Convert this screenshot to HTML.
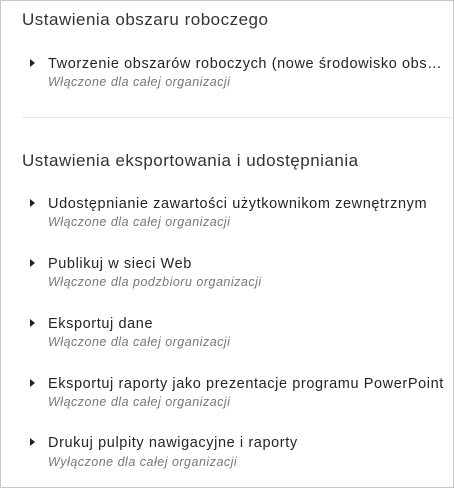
<!DOCTYPE html>
<html><head><meta charset="utf-8"><style>
html,body{margin:0;padding:0}
body{width:454px;height:488px;position:relative;overflow:hidden;background:#fff;font-family:"Liberation Sans",sans-serif;color:#252423}
.frame{position:absolute;left:0;top:0;width:452px;height:486px;border:1px solid #c8c8c8}
.h{position:absolute;left:22px;font-size:17px;letter-spacing:0.5px;color:#333;white-space:nowrap}
.it{position:absolute;left:48px;font-size:14.5px;letter-spacing:0.6px;white-space:nowrap;color:#252423}
.sub{position:absolute;left:48px;font-size:12.5px;letter-spacing:0.5px;font-style:italic;color:#777;white-space:nowrap}
.tri{position:absolute;left:30px;width:0;height:0;border-top:4px solid transparent;border-bottom:4px solid transparent;border-left:5px solid #222}
.div{position:absolute;left:22px;right:0;top:117px;height:1px;background:#e1e1e1}
</style></head><body>
<div class="frame"></div>
<div class="h" style="top:10px">Ustawienia obszaru roboczego</div>
<div class="tri" style="top:59px"></div>
<div class="it" style="top:56px;width:397px;overflow:hidden;text-overflow:ellipsis">Tworzenie obszarów roboczych (nowe środowisko obszaru roboczego)</div>
<div class="sub" style="top:75px">Włączone dla całej organizacji</div>
<div class="div"></div>
<div class="h" style="top:151px">Ustawienia eksportowania i udostępniania</div>
<div class="tri" style="top:199px"></div>
<div class="it" style="top:196px">Udostępnianie zawartości użytkownikom zewnętrznym</div>
<div class="sub" style="top:215px">Włączone dla całej organizacji</div>
<div class="tri" style="top:259px"></div>
<div class="it" style="top:256px">Publikuj w sieci Web</div>
<div class="sub" style="top:275px">Włączone dla podzbioru organizacji</div>
<div class="tri" style="top:319px"></div>
<div class="it" style="top:316px">Eksportuj dane</div>
<div class="sub" style="top:335px">Włączone dla całej organizacji</div>
<div class="tri" style="top:379px"></div>
<div class="it" style="top:376px">Eksportuj raporty jako prezentacje programu PowerPoint</div>
<div class="sub" style="top:395px">Włączone dla całej organizacji</div>
<div class="tri" style="top:438px"></div>
<div class="it" style="top:435px">Drukuj pulpity nawigacyjne i raporty</div>
<div class="sub" style="top:455px">Wyłączone dla całej organizacji</div>
</body></html>
